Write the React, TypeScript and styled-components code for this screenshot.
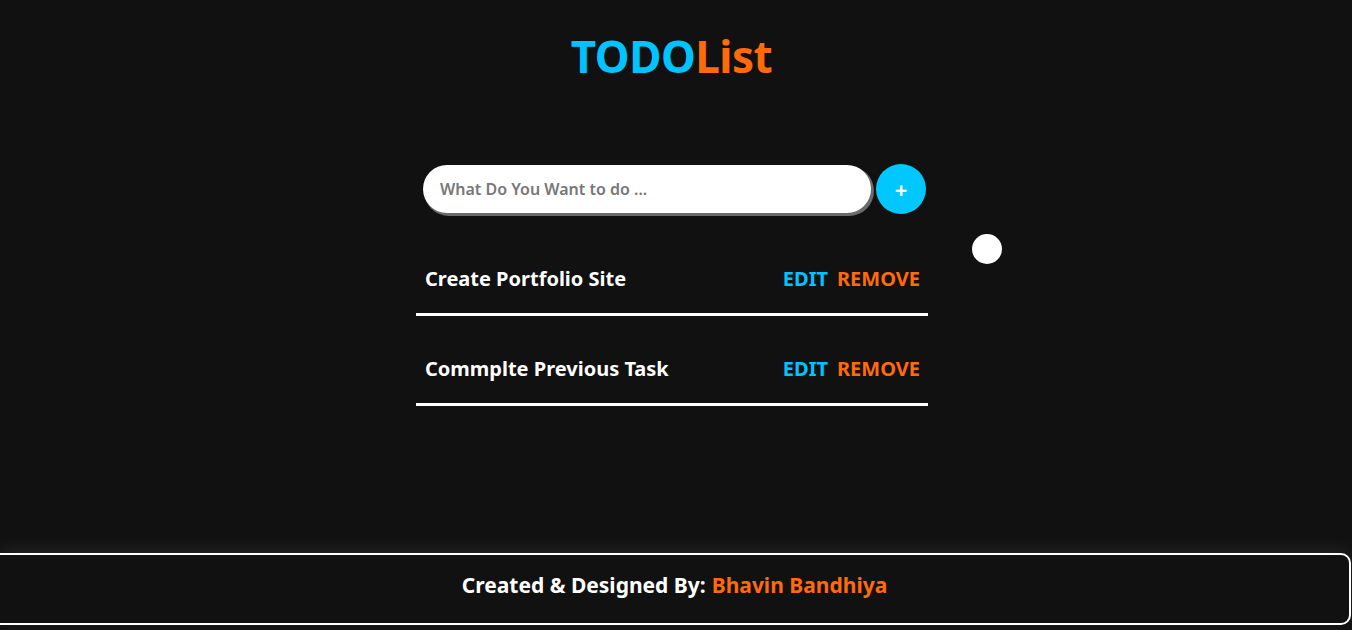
import React from "react";
import styled, { createGlobalStyle } from "styled-components";

const GlobalStyle = createGlobalStyle`
  html, body { margin: 0; padding: 0; background: #111111; }
  body { font-family: "Noto Sans", "Open Sans", sans-serif; overflow: hidden; }
  * { box-sizing: border-box; }
`;

const Page = styled.div`
  position: relative;
  min-height: 100vh;
  height: 630px;
  display: flex;
  flex-direction: column;
  align-items: center;
  background: #111111;
`;

const Title = styled.h1`
  margin: 28px 0 0 -9px;
  font-size: 44px;
  font-weight: 700;
  line-height: 56px;
  letter-spacing: -0.5px;
  color: #00c3ff;
`;

const Accent = styled.span`
  color: #ff6a0a;
`;

const Form = styled.div`
  margin-top: 80px;
  display: flex;
  align-items: center;
  gap: 5px;
  margin-left: -3px;
`;

const Input = styled.input`
  width: 448px;
  height: 48px;
  border: none;
  outline: none;
  border-radius: 24px;
  background: #ffffff;
  box-shadow: 2px 2px 0 1px #6b6b6b;
  padding: 0 17px;
  font-family: inherit;
  font-size: 16px;
  font-weight: 600;
  color: #333;
  &::placeholder { color: #777777; }
`;

const AddButton = styled.button`
  width: 50px;
  height: 50px;
  border-radius: 50%;
  border: none;
  background: #00c8ff;
  color: #ffffff;
  font-size: 22px;
  font-weight: 700;
  display: flex;
  align-items: center;
  justify-content: center;
  padding: 0;
  font-family: inherit;
`;

const List = styled.ul`
  list-style: none;
  margin: 12px 0 0;
  padding: 0;
  width: 512px;
  margin-left: -8px;
`;

const Item = styled.li`
  height: 90px;
  display: flex;
  align-items: center;
  justify-content: space-between;
  padding: 17px 8px 0 9px;
  border-bottom: 3px solid #ffffff;
`;

const ItemText = styled.span`
  color: #ffffff;
  font-size: 20px;
  font-weight: 700;
`;

const Actions = styled.div`
  display: flex;
  gap: 9px;
`;

const Action = styled.button<{ $tone: "edit" | "remove" }>`
  background: none;
  border: none;
  padding: 0;
  font-family: inherit;
  font-size: 20px;
  font-weight: 700;
  color: ${(p) => (p.$tone === "edit" ? "#00c3ff" : "#ff6a0a")};
`;

const Footer = styled.footer`
  margin-top: auto;
  margin-bottom: 5px;
  align-self: stretch;
  height: 72px;
  border: 2px solid #ffffff;
  border-left: none;
  border-radius: 0 10px 10px 0;
  margin-right: 1px;
  display: flex;
  align-items: center;
  justify-content: center;
  background: #111111;
  box-shadow: 0 -4px 18px rgba(255, 255, 255, 0.08);
  color: #ffffff;
  font-size: 21px;
  font-weight: 700;
  padding-bottom: 8px;
`;

const Author = styled.span`
  color: #ff6a0a;
  margin-left: 6px;
`;

const Cursor = styled.div`
  position: absolute;
  left: 972px;
  top: 234px;
  width: 30px;
  height: 30px;
  border-radius: 50%;
  background: #ffffff;
`;

export default function App() {
  const todos = ["Create Portfolio Site", "Commplte Previous Task"];
  return (
    <>
      <GlobalStyle />
      <Page>
        <Title>
          TODO<Accent>List</Accent>
        </Title>
        <Form>
          <Input placeholder="What Do You Want to do ..." />
          <AddButton>+</AddButton>
        </Form>
        <List>
          {todos.map((t) => (
            <Item key={t}>
              <ItemText>{t}</ItemText>
              <Actions>
                <Action $tone="edit">EDIT</Action>
                <Action $tone="remove">REMOVE</Action>
              </Actions>
            </Item>
          ))}
        </List>
        <Footer>
          Created &amp; Designed By:<Author>Bhavin Bandhiya</Author>
        </Footer>
        <Cursor />
      </Page>
    </>
  );
}
